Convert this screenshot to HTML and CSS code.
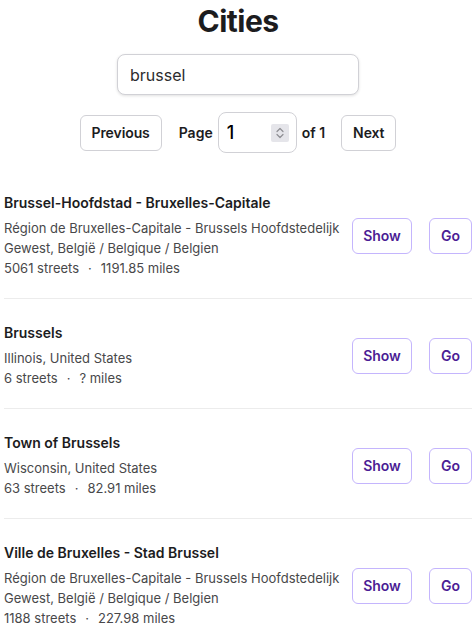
FILE: index.html
```html
<!DOCTYPE html>
<html lang="en">
<head>
<meta charset="utf-8">
<title>Cities</title>
<link rel="stylesheet" href="styles.css">
</head>
<body>
<main class="page">
  <h1 class="title">Cities</h1>
  <div class="search-row">
    <input class="search" type="text" value="brussel">
  </div>
  <div class="pager">
    <button class="pager-btn">Previous</button>
    <span class="pager-label">Page</span>
    <div class="page-input">
      <span class="page-value">1</span>
      <span class="spinner">
        <svg width="18" height="18" viewBox="0 0 18 18" aria-hidden="true">
          <path d="M6 7.5 L9 4.5 L12 7.5" fill="none" stroke="#8e8e93" stroke-width="1.2" stroke-linecap="round" stroke-linejoin="round"/>
          <path d="M6 10.5 L9 13.5 L12 10.5" fill="none" stroke="#8e8e93" stroke-width="1.2" stroke-linecap="round" stroke-linejoin="round"/>
        </svg>
      </span>
    </div>
    <span class="pager-label of">of 1</span>
    <button class="pager-btn">Next</button>
  </div>
  <ul class="cities">
    <li class="city">
      <div class="info">
        <div class="name">Brussel-Hoofdstad - Bruxelles-Capitale</div>
        <div class="region">Région de Bruxelles-Capitale - Brussels Hoofdstedelijk Gewest, België / Belgique / Belgien</div>
        <div class="stats">5061 streets<span class="dot">·</span>1191.85 miles</div>
      </div>
      <div class="actions">
        <button class="act show">Show</button>
        <button class="act go">Go</button>
      </div>
    </li>
    <li class="city">
      <div class="info">
        <div class="name">Brussels</div>
        <div class="region">Illinois, United States</div>
        <div class="stats">6 streets<span class="dot">·</span>? miles</div>
      </div>
      <div class="actions">
        <button class="act show">Show</button>
        <button class="act go">Go</button>
      </div>
    </li>
    <li class="city">
      <div class="info">
        <div class="name">Town of Brussels</div>
        <div class="region">Wisconsin, United States</div>
        <div class="stats">63 streets<span class="dot">·</span>82.91 miles</div>
      </div>
      <div class="actions">
        <button class="act show">Show</button>
        <button class="act go">Go</button>
      </div>
    </li>
    <li class="city">
      <div class="info">
        <div class="name">Ville de Bruxelles - Stad Brussel</div>
        <div class="region">Région de Bruxelles-Capitale - Brussels Hoofdstedelijk Gewest, België / Belgique / Belgien</div>
        <div class="stats">1188 streets<span class="dot">·</span>227.98 miles</div>
      </div>
      <div class="actions">
        <button class="act show">Show</button>
        <button class="act go">Go</button>
      </div>
    </li>
  </ul>
</main>
</body>
</html>
```
FILE: styles.css
```css
* { box-sizing: border-box; }
html, body { margin: 0; padding: 0; background: #fff; }
body {
  font-family: Inter, "Noto Sans", "Liberation Sans", sans-serif;
  color: #1c1c1e;
}
.page { padding: 0 4px; }
.title {
  margin: 2px 0 0;
  font-size: 30px;
  line-height: 38px;
  font-weight: 700;
  letter-spacing: -0.5px;
  text-align: center;
  color: #1c1c1e;
}
.search-row { display: flex; justify-content: center; margin-top: 14px; }
.search {
  width: 242px;
  height: 41px;
  border: 1px solid #d1d1d6;
  border-radius: 8px;
  padding: 0 12px;
  font-family: inherit;
  font-size: 16px;
  color: #2c2c2e;
  box-shadow: 0 1px 3px rgba(0,0,0,0.12);
  outline: none;
}
.pager {
  display: flex;
  justify-content: center;
  align-items: center;
  margin-top: 17px;
  height: 41px;
}
.pager-btn {
  height: 36px;
  padding: 0 11px;
  border: 1px solid #d1d1d6;
  border-radius: 6px;
  background: #fff;
  font-family: inherit;
  font-size: 14px;
  font-weight: 600;
  letter-spacing: -0.1px;
  color: #1c1c1e;
}
.pager-label {
  font-size: 14px;
  font-weight: 600;
  color: #1c1c1e;
  margin: 0 5px 0 17px;
}
.pager-label.of { margin: 0 16px 0 5px; }
.page-input {
  width: 79px;
  height: 41px;
  border: 1px solid #d1d1d6;
  border-radius: 8px;
  display: flex;
  align-items: center;
  justify-content: space-between;
  padding: 0 7px 0 8px;
}
.page-value { font-size: 18px; font-weight: 500; color: #000; }
.spinner {
  width: 18px;
  height: 18px;
  background: #e5e5ea;
  border-radius: 2px;
  display: flex;
}
.cities { list-style: none; margin: 16px 0 0; padding: 0; }
.city {
  display: flex;
  align-items: center;
  gap: 8px;
  padding: 24px 0 20px;
  border-bottom: 1px solid #ececec;
}
.city:last-child { border-bottom: none; }
.info { flex: 1; min-width: 0; }
.name {
  font-size: 14px;
  line-height: 20px;
  font-weight: 600;
  color: #1c1c1e;
  margin-bottom: 5px;
}
.region, .stats {
  font-size: 13px;
  line-height: 20px;
  color: #48484a;
}
.dot { margin: 0 9px; }
.actions { display: flex; gap: 17px; }
.act {
  height: 36px;
  border: 1px solid #c4b5fd;
  border-radius: 6px;
  background: #fff;
  font-family: inherit;
  font-size: 14px;
  font-weight: 600;
  color: #4c1d95;
}
.show { width: 60px; }
.go { width: 43px; }
```
